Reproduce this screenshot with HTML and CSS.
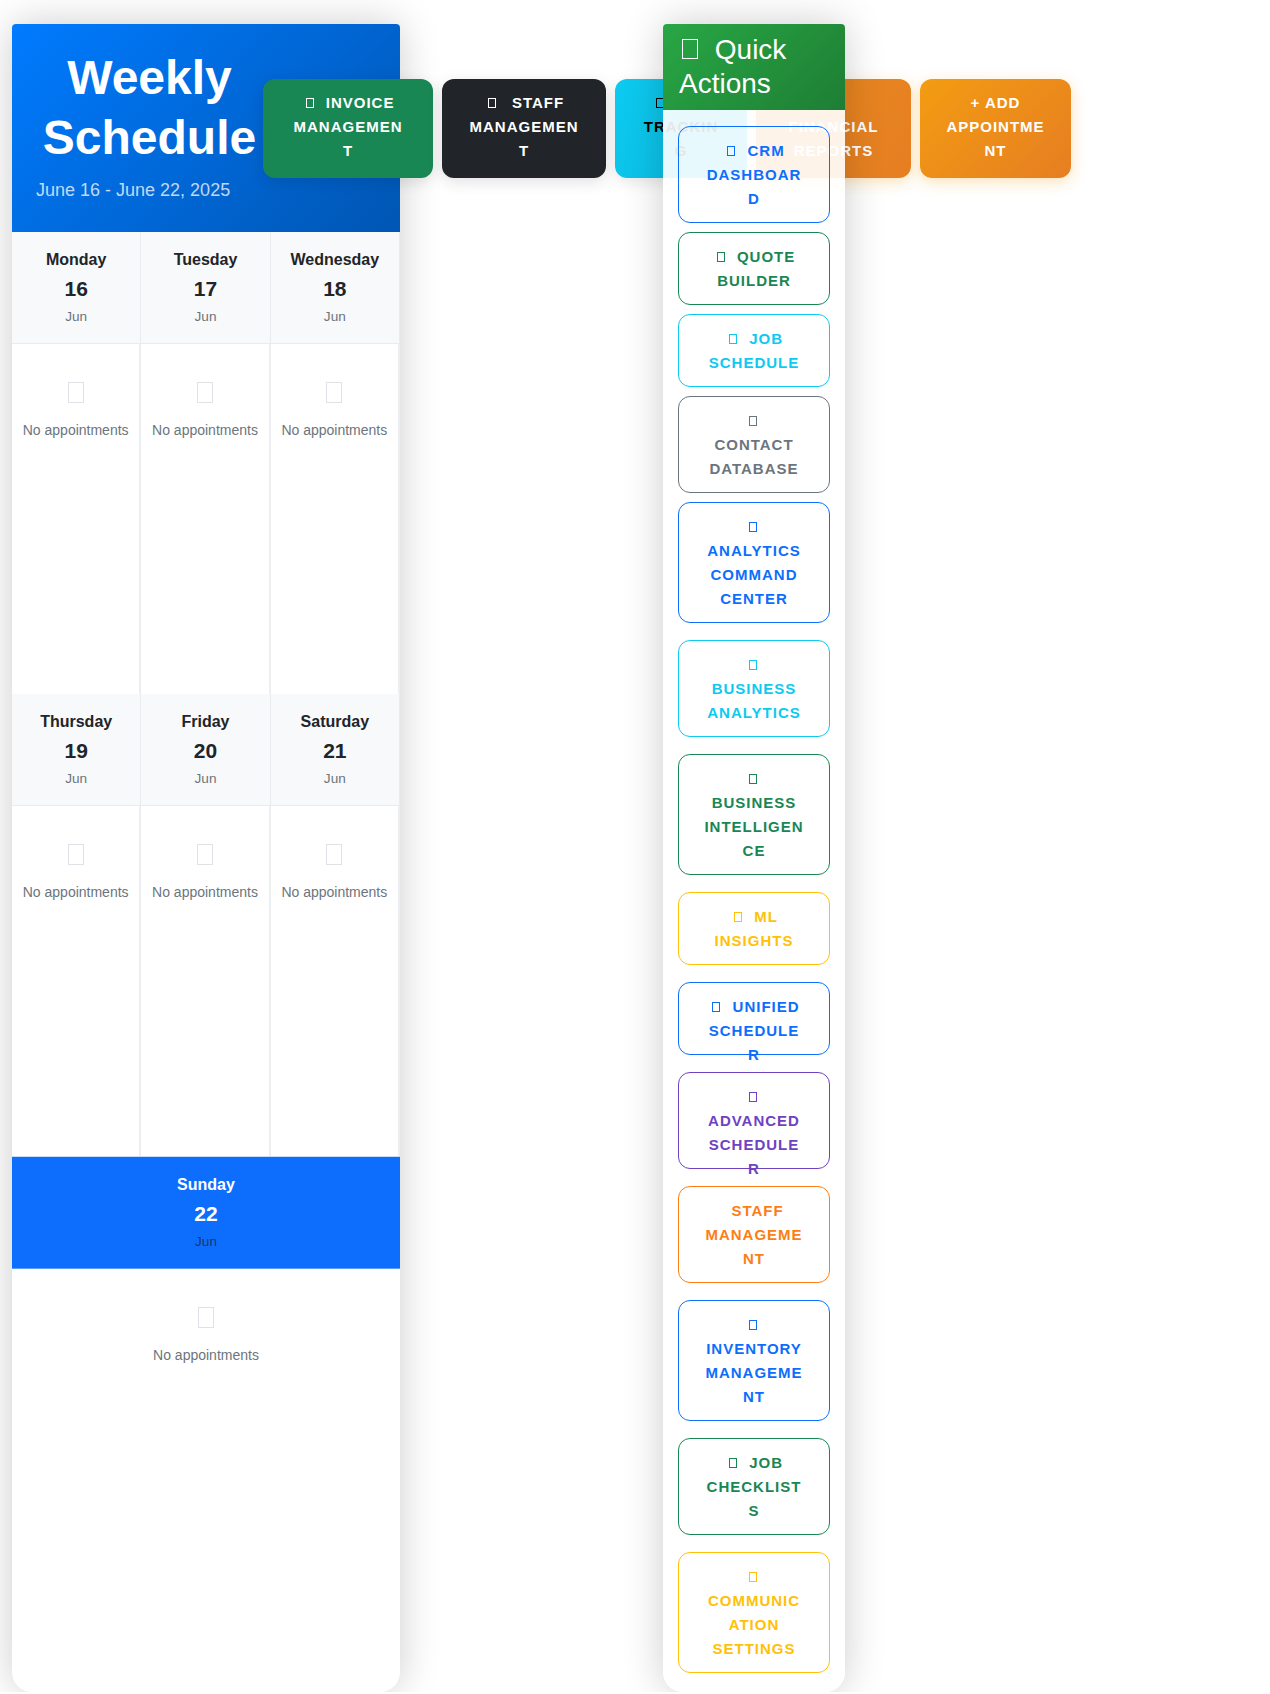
FILE: index.html
```html
<!DOCTYPE html>
<html lang="en">
<head>
<meta charset="utf-8">
<title>Weekly Schedule</title>
<link rel="stylesheet" href="styles.css">
</head>
<body>
<div class="page">
  <section class="schedule-card">
    <header class="schedule-header">
      <div class="title-block">
        <h1 class="title">Weekly Schedule</h1>
        <p class="range">June 16 - June 22, 2025</p>
      </div>
      <nav class="toolbar">
        <a href="#" class="tb-btn tb-invoice"><span class="ico"></span> Invoice Management</a>
        <a href="#" class="tb-btn tb-staff"><span class="ico ico--wide"></span> Staff Management</a>
        <a href="#" class="tb-btn tb-tracking"><span class="ico"></span> Job Tracking</a>
        <a href="#" class="tb-btn tb-financial"><span class="ico"></span> Financial Reports</a>
        <a href="#" class="tb-btn tb-add">+ Add Appointment</a>
      </nav>
    </header>

    <div class="week">
      <div class="day">
        <div class="day-head"><div class="day-name">Monday</div><div class="day-num">16</div><div class="day-mon">Jun</div></div>
        <div class="day-body"><span class="empty-ico"></span><p class="empty-text">No appointments</p></div>
      </div>
      <div class="day">
        <div class="day-head"><div class="day-name">Tuesday</div><div class="day-num">17</div><div class="day-mon">Jun</div></div>
        <div class="day-body"><span class="empty-ico"></span><p class="empty-text">No appointments</p></div>
      </div>
      <div class="day">
        <div class="day-head"><div class="day-name">Wednesday</div><div class="day-num">18</div><div class="day-mon">Jun</div></div>
        <div class="day-body"><span class="empty-ico"></span><p class="empty-text">No appointments</p></div>
      </div>
      <div class="day">
        <div class="day-head"><div class="day-name">Thursday</div><div class="day-num">19</div><div class="day-mon">Jun</div></div>
        <div class="day-body"><span class="empty-ico"></span><p class="empty-text">No appointments</p></div>
      </div>
      <div class="day">
        <div class="day-head"><div class="day-name">Friday</div><div class="day-num">20</div><div class="day-mon">Jun</div></div>
        <div class="day-body"><span class="empty-ico"></span><p class="empty-text">No appointments</p></div>
      </div>
      <div class="day">
        <div class="day-head"><div class="day-name">Saturday</div><div class="day-num">21</div><div class="day-mon">Jun</div></div>
        <div class="day-body"><span class="empty-ico"></span><p class="empty-text">No appointments</p></div>
      </div>
      <div class="day day--today">
        <div class="day-head"><div class="day-name">Sunday</div><div class="day-num">22</div><div class="day-mon">Jun</div></div>
        <div class="day-body"><span class="empty-ico"></span><p class="empty-text">No appointments</p></div>
      </div>
    </div>
  </section>

  <aside class="qa-card">
    <h2 class="qa-title"><span class="ico ico--lg"></span> Quick Actions</h2>
    <div class="qa-body">
      <div class="qa-group">
        <a href="#" class="qa-btn qa-primary"><span class="ico"></span> CRM Dashboard</a>
        <a href="#" class="qa-btn qa-success"><span class="ico"></span> Quote Builder</a>
        <a href="#" class="qa-btn qa-info"><span class="ico"></span> Job Schedule</a>
        <a href="#" class="qa-btn qa-secondary"><span class="ico"></span> Contact Database</a>
        <a href="#" class="qa-btn qa-primary"><span class="ico"></span> Analytics Command Center</a>
      </div>
      <a href="#" class="qa-btn qa-info"><span class="ico"></span> Business Analytics</a>
      <a href="#" class="qa-btn qa-success"><span class="ico"></span> Business Intelligence</a>
      <a href="#" class="qa-btn qa-warning"><span class="ico"></span> ML Insights</a>
      <a href="#" class="qa-btn qa-primary qa-fixed-2"><span class="ico"></span> Unified Scheduler</a>
      <a href="#" class="qa-btn qa-purple qa-fixed-3"><span class="ico"></span> Advanced Scheduler</a>
      <a href="#" class="qa-btn qa-orange"><span class="ico ico--blank"></span> Staff Management</a>
      <a href="#" class="qa-btn qa-primary"><span class="ico"></span> Inventory Management</a>
      <a href="#" class="qa-btn qa-success"><span class="ico"></span> Job Checklists</a>
      <a href="#" class="qa-btn qa-warning"><span class="ico"></span> Communication Settings</a>
    </div>
  </aside>
</div>
</body>
</html>
```

FILE: styles.css
```css
* { box-sizing: border-box; }

html, body {
  margin: 0;
  padding: 0;
  background: #ffffff;
}

body {
  font-family: "Liberation Sans", Arial, sans-serif;
  color: #212529;
}

a { text-decoration: none; }

.page {
  display: flex;
  align-items: stretch;
  gap: 263px;
  padding: 24px 0 0 12px;
}

/* ---------- schedule card ---------- */
.schedule-card {
  flex: 0 0 388px;
  width: 388px;
  background: #ffffff;
  border-radius: 4px 4px 20px 20px;
  box-shadow: 0 0 40px rgba(0, 0, 0, 0.2);
}

.schedule-header {
  display: flex;
  align-items: center;
  padding: 24px;
  background: linear-gradient(135deg, #007bff 0%, #0056b3 100%);
  border-radius: 4px 4px 0 0;
  color: #fff;
}

.title-block {
  flex: 0 0 227px;
  width: 227px;
}

.title {
  margin: 0;
  font-size: 48px;
  line-height: 60px;
  font-weight: 700;
  text-align: center;
  color: #ffffff;
}

.range {
  margin: 9px 0 4px;
  font-size: 18px;
  line-height: 27px;
  color: rgba(255, 255, 255, 0.75);
}

.toolbar {
  flex: 0 0 auto;
  display: flex;
  gap: 9px;
}

.tb-btn {
  display: block;
  padding: 12px 26px 15px;
  border-radius: 12px;
  font-size: 15px;
  line-height: 24px;
  font-weight: 700;
  letter-spacing: 1px;
  text-transform: uppercase;
  text-align: center;
  overflow-wrap: anywhere;
  color: #ffffff;
}

.tb-invoice {
  width: 170px;
  padding-left: 28px;
  padding-right: 28px;
  background: #198754;
  box-shadow: 0 4px 15px rgba(0, 0, 0, 0.12);
}

.tb-staff {
  width: 164px;
  background: #212529;
  box-shadow: 0 4px 15px rgba(0, 0, 0, 0.12);
}

.tb-tracking {
  width: 132px;
  background: linear-gradient(135deg, #0dcaf0 0%, #0bbde3 100%);
  color: #000000;
  box-shadow: 0 4px 15px rgba(0, 0, 0, 0.1);
}

.tb-financial {
  width: 155px;
  background: linear-gradient(135deg, #e88a1f 0%, #e67e22 100%);
  box-shadow: 0 4px 15px rgba(243, 156, 18, 0.3);
}

.tb-add {
  width: 151px;
  padding-left: 24px;
  padding-right: 24px;
  background: linear-gradient(135deg, #f39c12 0%, #e67e22 100%);
  box-shadow: 0 4px 15px rgba(243, 156, 18, 0.3);
}

/* tofu-style icon boxes */
.ico {
  display: inline-block;
  width: 8px;
  height: 10px;
  margin: 0 7px 0 4px;
  border: 1px solid currentColor;
}

.ico--wide { margin: 0 11px 0 4px; }

.ico--lg {
  width: 16px;
  height: 20px;
  margin: 0 9px 0 3px;
}

.ico--blank {
  width: 2px;
  margin: 0;
  border: 0;
}

/* ---------- week grid ---------- */
.week {
  display: grid;
  grid-template-columns: repeat(3, 1fr);
}

.day--today {
  grid-column: 1 / -1;
}

.day-head {
  padding: 16px 6px;
  background: #f8f9fa;
  border-right: 1px solid #e9ecef;
  border-bottom: 1px solid #e9ecef;
  text-align: center;
}

.day-name {
  font-size: 16px;
  line-height: 24px;
  font-weight: 700;
  color: #212529;
}

.day-num {
  margin-top: 4px;
  font-size: 21px;
  line-height: 25px;
  font-weight: 700;
  color: #212529;
}

.day-mon {
  margin-top: 6px;
  font-size: 13.6px;
  line-height: 20px;
  color: #6c757d;
}

.day-body {
  height: 350px;
  padding: 38px 2px 0;
  border-right: 2px solid #eceef1;
  text-align: center;
}

.empty-ico {
  display: block;
  width: 16px;
  height: 21px;
  margin: 0 auto 17px;
  border: 1px solid #dfe2e6;
}

.empty-text {
  margin: 0;
  font-size: 14px;
  line-height: 20px;
  color: #6c757d;
  white-space: nowrap;
}

.day--today .day-head {
  background: #0d6efd;
  border-top: 1px solid #c9dcf7;
  border-right: 0;
  border-bottom: 1px solid #5a9bff;
}

.day--today .day-name,
.day--today .day-num {
  color: #ffffff;
}

.day--today .day-mon {
  color: rgba(33, 37, 41, 0.78);
}

.day--today .day-body {
  border-right: 0;
}

/* ---------- quick actions ---------- */
.qa-card {
  flex: 0 0 182px;
  width: 182px;
  display: flex;
  flex-direction: column;
  border-radius: 4px 4px 20px 20px;
  box-shadow: 0 0 40px rgba(0, 0, 0, 0.2);
}

.qa-title {
  margin: 0;
  padding: 9px 16px;
  font-size: 28px;
  line-height: 34px;
  font-weight: 400;
  color: #ffffff;
  background: linear-gradient(135deg, #28a745 0%, #1e7e34 100%);
  border-radius: 4px 4px 0 0;
}

.qa-body {
  flex: 1 1 auto;
  display: flex;
  flex-direction: column;
  gap: 17px;
  padding: 16px 15px 19px;
  background: rgba(255, 255, 255, 0.9);
  border-radius: 0 0 20px 20px;
}

.qa-group {
  display: flex;
  flex-direction: column;
  gap: 9px;
}

.qa-btn {
  display: block;
  padding: 11.5px 24.5px;
  border: 1px solid currentColor;
  border-radius: 12px;
  background: transparent;
  font-size: 15px;
  line-height: 24px;
  font-weight: 700;
  letter-spacing: 1px;
  text-transform: uppercase;
  text-align: center;
  overflow-wrap: anywhere;
}

.qa-fixed-2 { height: 73px; }
.qa-fixed-3 { height: 97px; }

.qa-primary   { color: #0d6efd; }
.qa-success   { color: #198754; }
.qa-info      { color: #0dcaf0; }
.qa-secondary { color: #6c757d; }
.qa-warning   { color: #ffc107; }
.qa-purple    { color: #6f42c1; }
.qa-orange    { color: #fd7e14; }
```
